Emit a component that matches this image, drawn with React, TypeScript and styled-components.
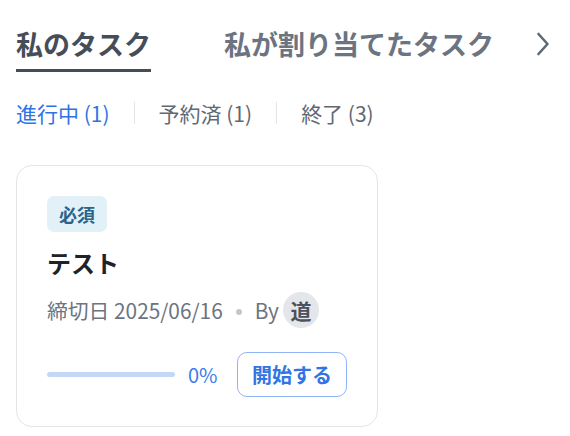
import React from "react";
import styled, { createGlobalStyle } from "styled-components";

const Global = createGlobalStyle`
  html, body { margin: 0; padding: 0; background: #ffffff; }
  body { font-family: "Noto Sans CJK JP", "Noto Sans", sans-serif; }
`;

const Page = styled.div`
  padding: 26px 0 0 16px;
  width: 570px;
  box-sizing: border-box;
`;

const TabBar = styled.div`
  display: flex;
  align-items: flex-start;
  padding-right: 20px;
`;

const Tabs = styled.div`
  display: flex;
  align-items: flex-start;
  gap: 73px;
`;

const Tab = styled.div<{ $active?: boolean }>`
  display: flex;
  flex-direction: column;
  gap: 7px;
  white-space: nowrap;
  flex-shrink: 0;
  font-size: 27px;
  line-height: 36px;
  font-weight: 700;
  color: ${(p) => (p.$active ? "#464d57" : "#6b7480")};
  &::after {
    content: "";
    display: block;
    height: 3px;
    background: ${(p) => (p.$active ? "#464d57" : "transparent")};
  }
`;

const Chevron = styled.div`
  margin-left: auto;
  height: 36px;
  display: flex;
  align-items: center;
`;

const FilterRow = styled.div`
  display: flex;
  align-items: center;
  margin-top: 26px;
  height: 30px;
`;

const Filter = styled.span<{ $active?: boolean }>`
  font-size: 21px;
  line-height: 30px;
  white-space: nowrap;
  color: ${(p) => (p.$active ? "#2f74e6" : "#5f6873")};
`;

const Divider = styled.span`
  width: 1px;
  height: 22px;
  background: #e3e5e8;
  margin: 0 24px;
`;

const Card = styled.div`
  margin-top: 37px;
  width: 362px;
  box-sizing: border-box;
  border: 1px solid #e3e5e8;
  border-radius: 16px;
  padding: 30px 30px 29px 30px;
  display: flex;
  flex-direction: column;
  align-items: flex-start;
`;

const Badge = styled.span`
  display: inline-flex;
  align-items: center;
  height: 36px;
  padding: 0 12px;
  border-radius: 7px;
  background: #e2f1f8;
  color: #2b6389;
  font-size: 18px;
  font-weight: 700;
`;

const Title = styled.div`
  margin-top: 14px;
  font-size: 24px;
  line-height: 34px;
  font-weight: 700;
  color: #1f2329;
`;

const Meta = styled.div`
  margin-top: 12px;
  display: flex;
  align-items: center;
  height: 36px;
  font-size: 20.8px;
  color: #6b7480;
  white-space: nowrap;
`;

const Dot = styled.span`
  width: 6px;
  height: 6px;
  border-radius: 50%;
  background: #c3c7cc;
  margin: 4px 13px 0 13px;
`;

const Avatar = styled.span`
  margin-left: 4px;
  width: 36px;
  height: 36px;
  border-radius: 50%;
  background: #e4e6e9;
  color: #4b525c;
  font-weight: 700;
  font-size: 21px;
  display: flex;
  align-items: center;
  justify-content: center;
`;

const ProgressRow = styled.div`
  margin-top: 24px;
  align-self: stretch;
  display: flex;
  align-items: center;
  justify-content: space-between;
`;

const ProgressGroup = styled.div`
  display: flex;
  align-items: center;
  gap: 13px;
`;

const Track = styled.div`
  width: 128px;
  height: 5px;
  border-radius: 3px;
  background: #c5d7f6;
  overflow: hidden;
`;

const Fill = styled.div`
  height: 100%;
  background: #2f74e6;
`;

const Percent = styled.span`
  font-size: 20px;
  color: #3b7de8;
`;

const StartButton = styled.button`
  height: 45px;
  width: 110px;
  box-sizing: border-box;
  border: 1px solid #8fb4f5;
  border-radius: 10px;
  background: #ffffff;
  color: #3274e4;
  font-family: inherit;
  font-size: 20px;
  font-weight: 700;
  padding: 0;
`;

export default function App() {
  const progress = 0;
  return (
    <Page>
      <Global />
      <TabBar>
        <Tabs>
          <Tab $active>私のタスク</Tab>
          <Tab>私が割り当てたタスク</Tab>
        </Tabs>
        <Chevron>
          <svg width="14" height="24" viewBox="0 0 14 24" fill="none">
            <path d="M2.5 2 L11.5 12 L2.5 22" stroke="#5f6875" strokeWidth="2.6" strokeLinecap="round" strokeLinejoin="round" />
          </svg>
        </Chevron>
      </TabBar>
      <FilterRow>
        <Filter $active>進行中 (1)</Filter>
        <Divider />
        <Filter>予約済 (1)</Filter>
        <Divider />
        <Filter>終了 (3)</Filter>
      </FilterRow>
      <Card>
        <Badge>必須</Badge>
        <Title>テスト</Title>
        <Meta>
          <span>締切日 2025/06/16</span>
          <Dot />
          <span>By</span>
          <Avatar>道</Avatar>
        </Meta>
        <ProgressRow>
          <ProgressGroup>
            <Track>
              <Fill style={{ width: `${progress}%` }} />
            </Track>
            <Percent>{progress}%</Percent>
          </ProgressGroup>
          <StartButton>開始する</StartButton>
        </ProgressRow>
      </Card>
    </Page>
  );
}
